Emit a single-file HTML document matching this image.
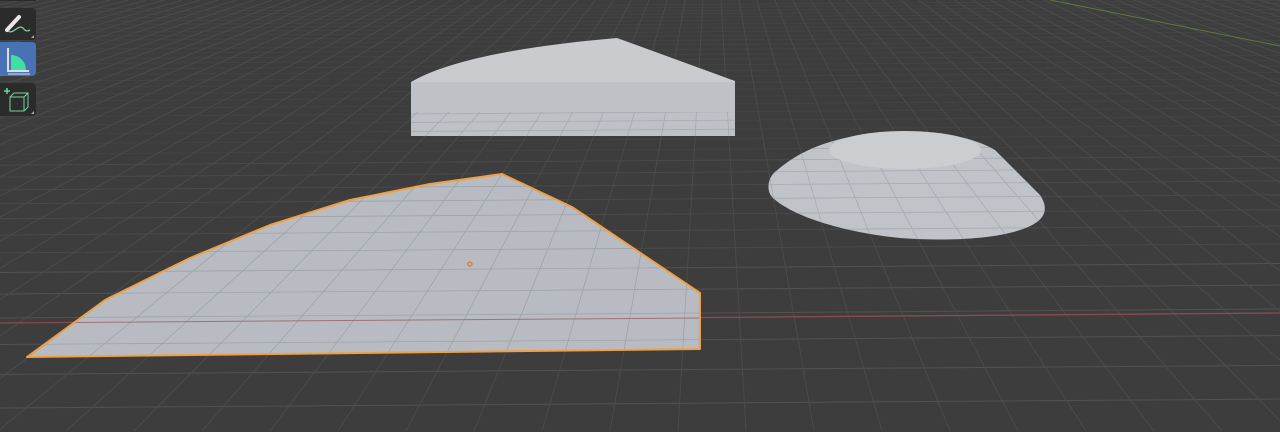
<!DOCTYPE html>
<html><head><meta charset="utf-8"><style>
html,body{margin:0;padding:0;width:1280px;height:432px;overflow:hidden;background:#3d3d3d}
svg{position:absolute;left:0;top:0;overflow:hidden}
.tb{position:absolute;left:0;width:36px;background:#2b2b2b;border-radius:0 4px 4px 0}
</style></head><body>
<svg id="s" width="1280" height="432" viewBox="0 0 1280 432">
<g id="grid" stroke-width="1"></g>
<line x1="0" y1="323" x2="1280" y2="313" stroke="#8a4a52" stroke-width="1.3"/>
<line x1="1050" y1="0" x2="1280" y2="46" stroke="#5e7a3a" stroke-width="1"/>
<path d="M411,82 C440,65 500,48 617,38 L735,81 L735,84 L411,84 Z" fill="#c9cbce"/>
<rect x="411" y="82" width="324" height="54" fill="#bec1c5"/>
<clipPath id="cb"><rect x="411" y="112" width="324" height="24"/></clipPath>
<g id="gb" clip-path="url(#cb)" stroke-width="0.8"></g>
<path d="M775,172 C800,150 830,138 880,132 C930,130 970,135 995,150 L1040,195 C1050,210 1045,222 1020,230 C990,240 940,241 900,238 C840,232 790,215 772,197 C766,190 768,178 775,172 Z" fill="#c0c3c8"/>
<clipPath id="cr"><path d="M775,172 C800,150 830,138 880,132 C930,130 970,135 995,150 L1040,195 C1050,210 1045,222 1020,230 C990,240 940,241 900,238 C840,232 790,215 772,197 C766,190 768,178 775,172 Z"/></clipPath>
<g id="gr" clip-path="url(#cr)" stroke-width="0.8"></g>
<ellipse cx="905" cy="150" rx="76" ry="19" fill="#cbced1"/>
<path d="M27,357 L105,300 L190,258 L270,225 L350,200 L430,184 L502,174 L572,207 L700,293 L700,349 Z" fill="#b8bcc2"/>
<clipPath id="cp"><path d="M27,357 L105,300 L190,258 L270,225 L350,200 L430,184 L502,174 L572,207 L700,293 L700,349 Z"/></clipPath>
<g id="g1" clip-path="url(#cp)" stroke-width="0.8"></g>
<line x1="0" y1="323" x2="700" y2="318" stroke="#a0707a" stroke-width="1" clip-path="url(#cp)"/>
<path d="M27,357 L105,300 L190,258 L270,225 L350,200 L430,184 L502,174 L572,207 L700,293 L700,349 Z" fill="none" stroke="#f0a040" stroke-width="2" stroke-linejoin="round"/>
<circle cx="470" cy="264" r="2" fill="none" stroke="#e07a20" stroke-width="1.2"/>
</svg>
<div class="tb" style="top:0;height:1px"></div>
<div class="tb" style="top:8px;height:32px"></div>
<div class="tb" style="top:42px;height:34px;background:#4772b3"></div>
<div class="tb" style="top:83px;height:33px"></div>
<svg width="40" height="120" style="position:absolute;left:0;top:0">
<path d="M7,30 L19,17" stroke="#e8e8e8" stroke-width="4" stroke-linecap="round"/>
<path d="M8,31 C13,35 18,24 23,28 C26,32 28,31 30,30" stroke="#7ad0a0" stroke-width="1.3" fill="none"/>
<path d="M31,38 L34,38 L34,35Z" fill="#aaa"/>
<path d="M8,48 L8,71 L29,71" stroke="#ddd" stroke-width="2" fill="none"/>
<path d="M11,70 L11,55 A15,15 0 0 1 26,70 Z" fill="#40e0a0"/>
<path d="M8,74 L30,74" stroke="#ddd" stroke-width="1"/>
<path d="M7,88 L7,94 M4,91 L10,91" stroke="#7ad0a0" stroke-width="1.5"/>
<path d="M10,97 L14,93 L28,93 L28,107 L24,111 L10,111 Z M10,97 L24,97 L24,111 M24,97 L28,93" stroke="#7ad0a0" stroke-width="1" fill="none"/>
<path d="M31,114 L34,114 L34,111Z" fill="#aaa"/>
</svg>
<script>
var ns="http://www.w3.org/2000/svg";
function L(g,x1,y1,x2,y2,c){var l=document.createElementNS(ns,"line");l.setAttribute("x1",x1);l.setAttribute("y1",y1);l.setAttribute("x2",x2);l.setAttribute("y2",y2);l.setAttribute("stroke",c);g.appendChild(l);}
var vx=712,vy=-155;
var ys=[];
for(var k=-2;k<45;k++){var inv=0.001792+k*0.000115;var y=1/inv+vy;if(y<4)break;if(y<=426)ys.push(y);}
var xs=[];for(var x=882-68*60;x<882+68*60;x+=68)xs.push(x);
function draw(g,col){
 ys.forEach(function(y){var c=col||(y>250?"#525252":(y>150?"#4a4a4a":"#434343"));L(g,0,y+5,1280,y-4,c);});
 xs.forEach(function(x){
  var x0=vx+(x-vx)*(0-vy)/(432-vy);
  L(g,x0,0,x,431,col||"#4b4b4b");});
}
draw(document.getElementById("grid"));
draw(document.getElementById("g1"),"#9da2a9");
draw(document.getElementById("gr"),"#a6aab0");
draw(document.getElementById("gb"),"#a6aab0");
</script>
</body></html>
